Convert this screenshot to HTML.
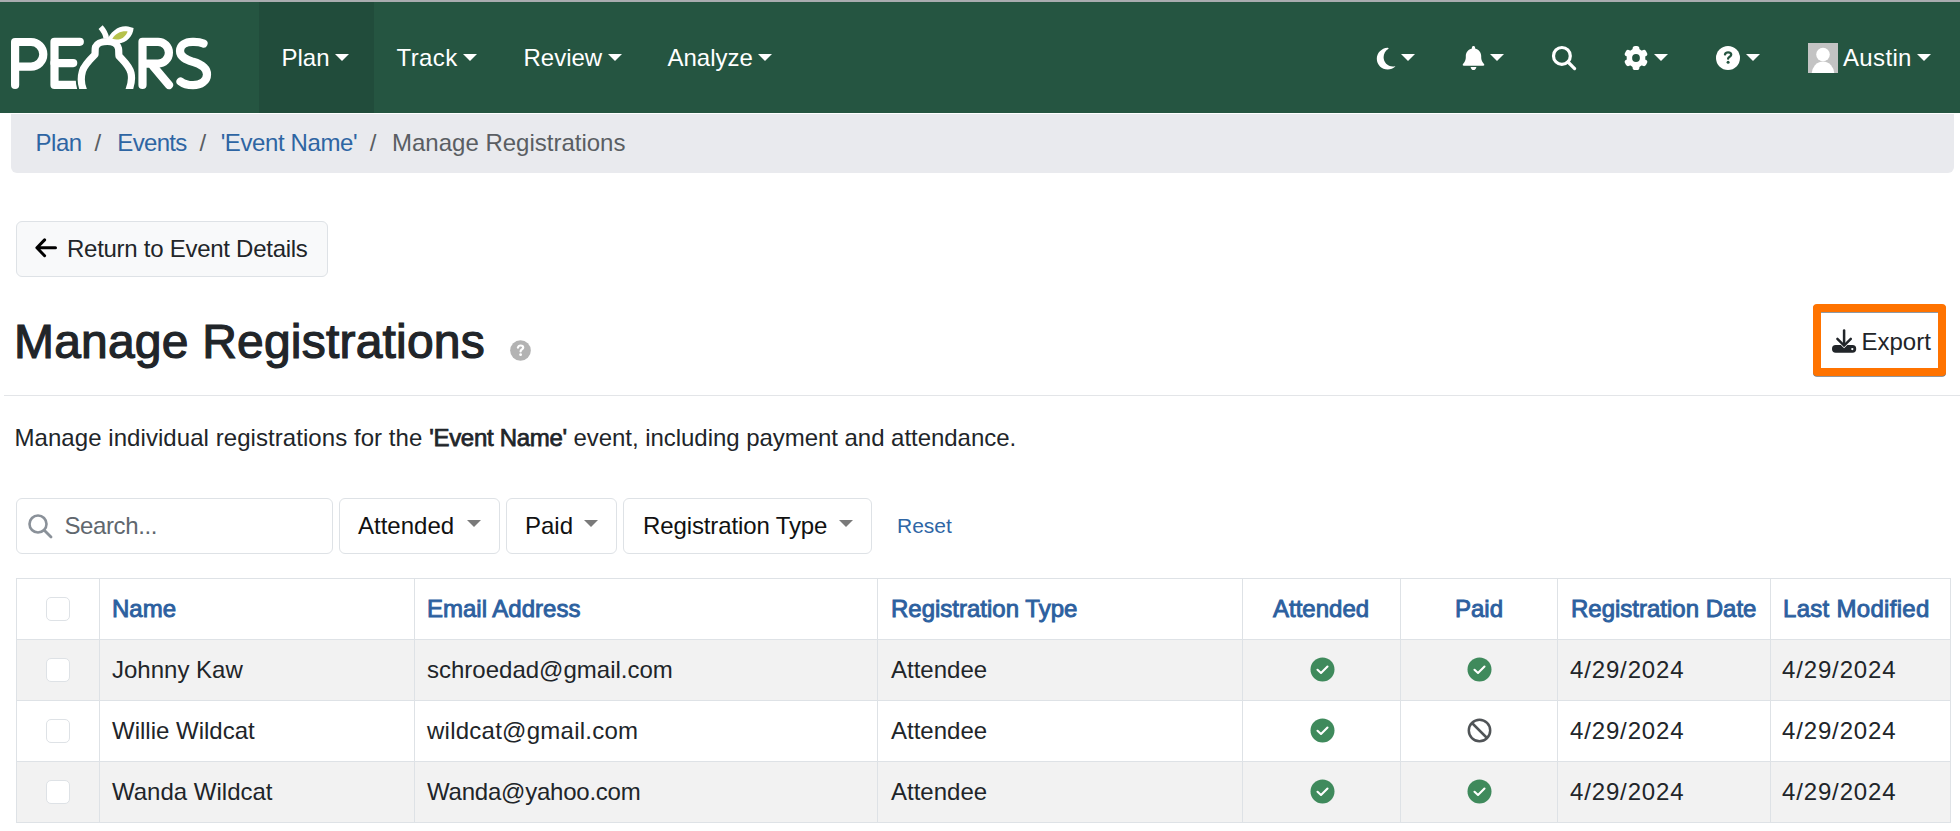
<!DOCTYPE html>
<html><head><meta charset="utf-8">
<style>
*{box-sizing:border-box;margin:0;padding:0}
html,body{width:1960px;height:831px;overflow:hidden;background:#fff;font-family:"Liberation Sans",sans-serif;color:#212529;font-size:24px}
.abs{position:absolute}
.topline{left:0;top:0;width:1960px;height:2px;background:#a9acaf}
.nav{left:0;top:2px;width:1960px;height:110.5px;background:#255541}
.navact{left:259px;top:2px;width:114.5px;height:110.5px;background:#214c3b}
.nt{color:#fff;font-size:24px;line-height:24px;white-space:nowrap}
.caret{display:inline-block;width:0;height:0;border-top:7.2px solid currentColor;border-left:7.2px solid transparent;border-right:7.2px solid transparent;vertical-align:0.2em}
.nt .caret{margin-left:5.5px}
.crumb{left:11px;top:113.5px;width:1943px;height:59.5px;background:#e9eaee;border-radius:0 0 6px 6px}
.bc{font-size:24px;line-height:24px;color:#2e65a3;white-space:nowrap}
.sep{color:#5a5e63}
.btn{border:1px solid #dee2e6;border-radius:6px;background:#f8f9fa}
.t{white-space:nowrap;line-height:24px}
table{border-collapse:collapse}
.th{color:#2c609f;-webkit-text-stroke:0.9px #2c609f}
</style></head>
<body>
<div class="abs topline"></div>
<div class="abs nav"></div>
<div class="abs navact"></div>

<!-- logo -->
<svg class="abs" style="left:0;top:0" width="230" height="112" viewBox="0 0 230 112">
 <defs><clipPath id="lc"><rect x="0" y="0" width="230" height="89"/></clipPath></defs>
 <g fill="none" stroke="#fff" stroke-width="8.2" stroke-linecap="round" stroke-linejoin="round">
  <path d="M15.1,85 V42 H31 A12.3,12.3 0 0 1 31,66.6 H15.1"/>
  <path d="M79.8,41.8 H54.5 V84.9 H77"/>
  <path d="M54.5,63.1 H73.2"/>
  <path d="M142.5,85 V41.8 H158 A10.9,10.9 0 0 1 158,63.6 H143"/>
  <path d="M153,66 L169,85"/>
  <path d="M203.5,43.5 C199,41.5 195,41.8 192.5,41.8 C185,41.8 180,45.5 180,51 C180,57 186,59.5 193,61.8 C201,64.2 207,67.5 207,74.5 C207,81 201,85.2 193,85.2 C187.5,85.2 183,83.5 180.5,81.5"/>
 </g>
 <g clip-path="url(#lc)">
  <path d="M84.8,93 C81,86 80.5,78 82.5,71 C84,65.5 90,59.5 95,54.5 C95.2,52 95,48.5 95.5,47 C97,43.5 101.5,41.5 107.3,41.5 C113,41.5 117.5,44 118.5,48.5 C119,51 118.5,53.5 119,56 C124,61.5 129.5,66 131,73 C132.5,80 131,86 127.8,93" fill="none" stroke="#255541" stroke-width="11"/>
  <path d="M84.8,93 C81,86 80.5,78 82.5,71 C84,65.5 90,59.5 95,54.5 C95.2,52 95,48.5 95.5,47 C97,43.5 101.5,41.5 107.3,41.5 C113,41.5 117.5,44 118.5,48.5 C119,51 118.5,53.5 119,56 C124,61.5 129.5,66 131,73 C132.5,80 131,86 127.8,93" fill="none" stroke="#fff" stroke-width="7.2" stroke-linejoin="round"/>
 </g>
 <path d="M100.6,27.2 C103,29.8 105.6,33 106.3,38.5" stroke="#fff" stroke-width="5.6" fill="none"/>
 <path d="M106.5,41.5 C110,32 118,26 126,26.3 C129,26.5 131,27.3 133.6,28 C133,36 127,43 118,43.6 C114,43.8 110,43 106.5,41.5 Z" fill="#fff"/>
 <path d="M112.3,38.8 C115.5,33.5 121,30.8 127.6,31.4 C125.5,37 120,41.3 112.3,38.8 Z" fill="#b6c24b"/>
</svg>

<!-- nav items -->
<div class="abs nt" style="left:281.5px;top:46px">Plan<span class="caret"></span></div>
<div class="abs nt" style="left:396.5px;top:46px;letter-spacing:0.4px">Track<span class="caret"></span></div>
<div class="abs nt" style="left:523.5px;top:46px">Review<span class="caret"></span></div>
<div class="abs nt" style="left:667.5px;top:46px">Analyze<span class="caret"></span></div>


<!-- right nav icons -->
<svg class="abs" style="left:1376.3px;top:46.6px" width="20" height="23" viewBox="0 0 20 23"><path d="M11.5,0.8 C5.5,1.2 0.8,6 0.8,11.8 C0.8,17.8 5.7,22.6 11.7,22.6 C14.6,22.6 17.3,21.5 19.3,19.6 C19.5,19.4 19.3,19.1 19.0,19.2 C18.3,19.3 17.6,19.4 16.9,19.4 C11.4,19.4 7.6,15.4 7.6,10.3 C7.6,6.7 9.6,3.5 12.5,1.8 C12.8,1.6 12.6,1.1 12.2,1.0 C12,0.9 11.7,0.8 11.5,0.8 Z" fill="#fff"/></svg>
<div class="abs caret" style="left:1401px;top:54px;color:#fff"></div>

<svg class="abs" style="left:1462px;top:45px" width="23" height="26" viewBox="0 0 23 26"><path d="M11.5,0.9 C10.6,0.9 9.9,1.6 9.9,2.5 V3.4 C6.3,4.1 3.8,7.3 3.8,11 V12.2 C3.8,14.4 3.0,16.5 1.6,18.2 L1.0,18.9 C0.5,19.5 0.6,20.7 1.9,20.7 H21.1 C22.4,20.7 22.5,19.5 22.0,18.9 L21.4,18.2 C20.0,16.5 19.2,14.4 19.2,12.2 V11 C19.2,7.3 16.7,4.1 13.1,3.4 V2.5 C13.1,1.6 12.4,0.9 11.5,0.9 Z M8.6,21.9 C8.9,23.9 10.1,25.1 11.5,25.1 C12.9,25.1 14.1,23.9 14.4,21.9 Z" fill="#fff"/></svg>
<div class="abs caret" style="left:1490px;top:54px;color:#fff"></div>

<svg class="abs" style="left:1550px;top:44px" width="28" height="28" viewBox="0 0 28 28"><circle cx="11.9" cy="11.9" r="8.4" fill="none" stroke="#fff" stroke-width="3.2"/><path d="M18,18 L24.6,24.6" stroke="#fff" stroke-width="3.2" stroke-linecap="round"/></svg>

<svg class="abs" style="left:1623px;top:45px" width="26" height="26" viewBox="0 0 26 26"><g fill="#fff"><circle cx="13" cy="13" r="9.4"/>
<g id="tooth"><rect x="9.6" y="0.9" width="6.8" height="6" rx="2.6"/></g>
<use href="#tooth" transform="rotate(60 13 13)"/><use href="#tooth" transform="rotate(120 13 13)"/><use href="#tooth" transform="rotate(180 13 13)"/><use href="#tooth" transform="rotate(240 13 13)"/><use href="#tooth" transform="rotate(300 13 13)"/></g>
<circle cx="13" cy="13" r="3.9" fill="#255541"/></svg>
<div class="abs caret" style="left:1654px;top:54px;color:#fff"></div>

<svg class="abs" style="left:1715px;top:45px" width="26" height="26" viewBox="0 0 26 26"><circle cx="13" cy="12.9" r="12" fill="#fff"/><path d="M10,9.4 C10.4,8.1 11.5,7.4 13.1,7.4 C14.9,7.4 16.2,8.4 16.2,9.8 C16.2,11.6 13.1,11.9 13.1,13.7" fill="none" stroke="#255541" stroke-width="2.3" stroke-linecap="round" stroke-linejoin="round"/><circle cx="13.1" cy="17.2" r="1.5" fill="#255541"/></svg>
<div class="abs caret" style="left:1746px;top:54px;color:#fff"></div>

<svg class="abs" style="left:1808px;top:43px" width="30" height="30" viewBox="0 0 30 30"><rect width="30" height="30" fill="#c3c3c3"/><circle cx="15" cy="11.5" r="6.8" fill="#fff"/><ellipse cx="15" cy="31" rx="11.3" ry="12.5" fill="#fff"/></svg>
<div class="abs nt" style="left:1843px;top:46px;letter-spacing:0.35px">Austin<span class="caret"></span></div>

<div class="abs crumb"></div>
<div class="abs bc" style="left:35.6px;top:131px;letter-spacing:-0.5px">Plan</div>
<div class="abs bc sep" style="left:94.5px;top:131px">/</div>
<div class="abs bc" style="left:117.3px;top:131px;letter-spacing:-0.67px">Events</div>
<div class="abs bc sep" style="left:199.6px;top:131px">/</div>
<div class="abs bc" style="left:220.7px;top:131px;letter-spacing:-0.4px">'Event Name'</div>
<div class="abs bc sep" style="left:369.7px;top:131px">/</div>
<div class="abs bc sep" style="left:392px;top:131px">Manage Registrations</div>

<div class="abs btn" style="left:16px;top:221px;width:312px;height:56px"></div>
<svg class="abs" style="left:34px;top:237px" width="26" height="22" viewBox="0 0 26 22"><path d="M3.5,10.8 H21.5 M10.6,2.9 L2.9,10.8 L10.6,18.7" fill="none" stroke="#000" stroke-width="3" stroke-linecap="round" stroke-linejoin="round"/></svg>
<div class="abs t" style="left:67px;top:237px;letter-spacing:-0.27px">Return to Event Details</div>

<div class="abs t" style="left:14px;top:317.5px;font-size:48px;line-height:48px;letter-spacing:0.2px;-webkit-text-stroke:1.2px #212529">Manage Registrations</div>

<div class="abs" style="left:4px;top:395px;width:1956px;height:1px;background:#e3e5e8"></div>

<div class="abs t" style="left:14.5px;top:426px;white-space:pre"><span style="letter-spacing:0.06px">Manage individual registrations for the </span><span style="letter-spacing:-0.3px;-webkit-text-stroke:0.75px #212529">'Event Name'</span><span style="letter-spacing:-0.04px"> event, including payment and attendance.</span></div>


<!-- title help icon -->
<svg class="abs" style="left:510px;top:340px" width="21" height="21" viewBox="0 0 21 21"><circle cx="10.5" cy="10.5" r="10.35" fill="#b3b3b3"/><path d="M7.9,7.6 C8.3,6.2 9.2,5.5 10.5,5.5 C12.1,5.5 13.2,6.4 13.2,7.7 C13.2,9.4 10.6,9.6 10.6,11.4" fill="none" stroke="#fff" stroke-width="2.2" stroke-linecap="round" stroke-linejoin="round"/><circle cx="10.6" cy="14.7" r="1.4" fill="#fff"/></svg>

<!-- export -->
<div class="abs" style="left:1813px;top:304px;width:133px;height:72px;background:#ff7300;border-radius:4px;box-shadow:0 0.8px 0.6px rgba(60,70,80,0.75)"></div>
<div class="abs" style="left:1821px;top:312.3px;width:117px;height:56px;background:#fff;border-top:1px solid #8d99a4"></div>
<svg class="abs" style="left:1831px;top:328px" width="26" height="26" viewBox="0 0 26 26">
 <rect x="1" y="17.1" width="24.2" height="7.6" rx="3.7" fill="#212529"/>
 <path d="M6.4,10.9 L13.1,17.6 L19.8,10.9" stroke="#fff" stroke-width="3.9" stroke-linecap="round" stroke-linejoin="miter" fill="none"/>
 <path d="M13.1,2.5 V17" stroke="#212529" stroke-width="2.5" stroke-linecap="round" fill="none"/>
 <path d="M6.4,10.9 L13.1,17.6 L19.8,10.9" stroke="#212529" stroke-width="2.5" stroke-linecap="round" stroke-linejoin="miter" fill="none"/>
 <circle cx="21.3" cy="21.1" r="1.15" fill="#fff"/>
</svg>
<div class="abs t" style="left:1861.5px;top:330px">Export</div>

<!-- filters -->
<div class="abs" style="left:16px;top:498px;width:317px;height:56px;border:1px solid #dee2e6;border-radius:6px;background:#fff"></div>
<svg class="abs" style="left:27px;top:513px" width="27" height="27" viewBox="0 0 27 27"><circle cx="11" cy="11" r="8.5" stroke="#8a9199" stroke-width="2.6" fill="none"/><path d="M17.5,17.5 L24,24" stroke="#8a9199" stroke-width="2.8" stroke-linecap="round"/></svg>
<div class="abs t" style="left:64.5px;top:514px;color:#60676e;letter-spacing:-0.4px">Search...</div>

<div class="abs" style="left:339px;top:498px;width:161px;height:56px;border:1px solid #dee2e6;border-radius:6px;background:#fff"></div>
<div class="abs t" style="left:358px;top:514px;color:#111">Attended</div>
<div class="abs caret" style="left:467px;top:520px;color:#7a7a7a"></div>
<div class="abs" style="left:506px;top:498px;width:111px;height:56px;border:1px solid #dee2e6;border-radius:6px;background:#fff"></div>
<div class="abs t" style="left:525px;top:514px;color:#111">Paid</div>
<div class="abs caret" style="left:584px;top:520px;color:#7a7a7a"></div>
<div class="abs" style="left:623px;top:498px;width:249px;height:56px;border:1px solid #dee2e6;border-radius:6px;background:#fff"></div>
<div class="abs t" style="left:643px;top:514px;color:#111;letter-spacing:-0.12px">Registration Type</div>
<div class="abs caret" style="left:839px;top:520px;color:#7a7a7a"></div>
<div class="abs t" style="left:897px;top:513.5px;font-size:21px;color:#2f66a5">Reset</div>

<!-- table -->
<div class="abs" style="left:16px;top:578px;width:1935px;height:245px;border:1px solid #dee2e6"></div>
<div class="abs" style="left:17px;top:640px;width:1933px;height:61px;background:#f2f2f2"></div>
<div class="abs" style="left:17px;top:762px;width:1933px;height:60px;background:#f2f2f2"></div>
<div class="abs" style="left:17px;top:639px;width:1933px;height:1px;background:#dee2e6"></div>
<div class="abs" style="left:17px;top:700px;width:1933px;height:1px;background:#dee2e6"></div>
<div class="abs" style="left:17px;top:761px;width:1933px;height:1px;background:#dee2e6"></div>
<div class="abs" style="left:99px;top:579px;width:1px;height:243px;background:#dee2e6"></div>
<div class="abs" style="left:414px;top:579px;width:1px;height:243px;background:#dee2e6"></div>
<div class="abs" style="left:877px;top:579px;width:1px;height:243px;background:#dee2e6"></div>
<div class="abs" style="left:1242px;top:579px;width:1px;height:243px;background:#dee2e6"></div>
<div class="abs" style="left:1400px;top:579px;width:1px;height:243px;background:#dee2e6"></div>
<div class="abs" style="left:1557px;top:579px;width:1px;height:243px;background:#dee2e6"></div>
<div class="abs" style="left:1770px;top:579px;width:1px;height:243px;background:#dee2e6"></div>

<!-- table content -->
<div class="abs" style="left:46px;top:597px;width:24px;height:24px;border:1px solid #dee2e6;border-radius:5px;background:#fff"></div>
<div class="abs" style="left:46px;top:658px;width:24px;height:24px;border:1px solid #dee2e6;border-radius:5px;background:#fff"></div>
<div class="abs" style="left:46px;top:719px;width:24px;height:24px;border:1px solid #dee2e6;border-radius:5px;background:#fff"></div>
<div class="abs" style="left:46px;top:780px;width:24px;height:24px;border:1px solid #dee2e6;border-radius:5px;background:#fff"></div>
<div class="abs t th" style="left:112px;top:597px">Name</div>
<div class="abs t th" style="left:427px;top:597px">Email Address</div>
<div class="abs t th" style="left:891px;top:597px">Registration Type</div>
<div class="abs t th" style="left:1273px;top:597px">Attended</div>
<div class="abs t th" style="left:1455px;top:597px">Paid</div>
<div class="abs t th" style="left:1571px;top:597px">Registration Date</div>
<div class="abs t th" style="left:1783px;top:597px;letter-spacing:0.3px">Last Modified</div>
<div class="abs t" style="left:112px;top:658px">Johnny Kaw</div>
<div class="abs t" style="left:427px;top:658px">schroedad@gmail.com</div>
<div class="abs t" style="left:891px;top:658px">Attendee</div>
<div class="abs t" style="left:1570px;top:658px;letter-spacing:0.85px">4/29/2024</div>
<div class="abs t" style="left:1782px;top:658px;letter-spacing:0.85px">4/29/2024</div>
<svg class="abs" style="left:1309.5px;top:656.5px" width="25" height="25" viewBox="0 0 25 25"><circle cx="12.5" cy="12.5" r="12" fill="#3f8a5c"/><path d="M7.5,12.8 L11,16 L17.5,9.5" stroke="#fff" stroke-width="2.1" fill="none" stroke-linecap="round" stroke-linejoin="round"/></svg>
<svg class="abs" style="left:1466.5px;top:656.5px" width="25" height="25" viewBox="0 0 25 25"><circle cx="12.5" cy="12.5" r="12" fill="#3f8a5c"/><path d="M7.5,12.8 L11,16 L17.5,9.5" stroke="#fff" stroke-width="2.1" fill="none" stroke-linecap="round" stroke-linejoin="round"/></svg>
<div class="abs t" style="left:112px;top:719px">Willie Wildcat</div>
<div class="abs t" style="left:427px;top:719px;letter-spacing:0.25px">wildcat@gmail.com</div>
<div class="abs t" style="left:891px;top:719px">Attendee</div>
<div class="abs t" style="left:1570px;top:719px;letter-spacing:0.85px">4/29/2024</div>
<div class="abs t" style="left:1782px;top:719px;letter-spacing:0.85px">4/29/2024</div>
<svg class="abs" style="left:1309.5px;top:717.5px" width="25" height="25" viewBox="0 0 25 25"><circle cx="12.5" cy="12.5" r="12" fill="#3f8a5c"/><path d="M7.5,12.8 L11,16 L17.5,9.5" stroke="#fff" stroke-width="2.1" fill="none" stroke-linecap="round" stroke-linejoin="round"/></svg>
<svg class="abs" style="left:1466.5px;top:717.5px" width="25" height="25" viewBox="0 0 25 25"><circle cx="12.5" cy="12.5" r="10.7" fill="none" stroke="#505457" stroke-width="2.5"/><path d="M5,5 L20,20" stroke="#505457" stroke-width="2.5"/></svg>
<div class="abs t" style="left:112px;top:780px">Wanda Wildcat</div>
<div class="abs t" style="left:427px;top:780px;letter-spacing:-0.23px">Wanda@yahoo.com</div>
<div class="abs t" style="left:891px;top:780px">Attendee</div>
<div class="abs t" style="left:1570px;top:780px;letter-spacing:0.85px">4/29/2024</div>
<div class="abs t" style="left:1782px;top:780px;letter-spacing:0.85px">4/29/2024</div>
<svg class="abs" style="left:1309.5px;top:778.5px" width="25" height="25" viewBox="0 0 25 25"><circle cx="12.5" cy="12.5" r="12" fill="#3f8a5c"/><path d="M7.5,12.8 L11,16 L17.5,9.5" stroke="#fff" stroke-width="2.1" fill="none" stroke-linecap="round" stroke-linejoin="round"/></svg>
<svg class="abs" style="left:1466.5px;top:778.5px" width="25" height="25" viewBox="0 0 25 25"><circle cx="12.5" cy="12.5" r="12" fill="#3f8a5c"/><path d="M7.5,12.8 L11,16 L17.5,9.5" stroke="#fff" stroke-width="2.1" fill="none" stroke-linecap="round" stroke-linejoin="round"/></svg>
</body></html>
